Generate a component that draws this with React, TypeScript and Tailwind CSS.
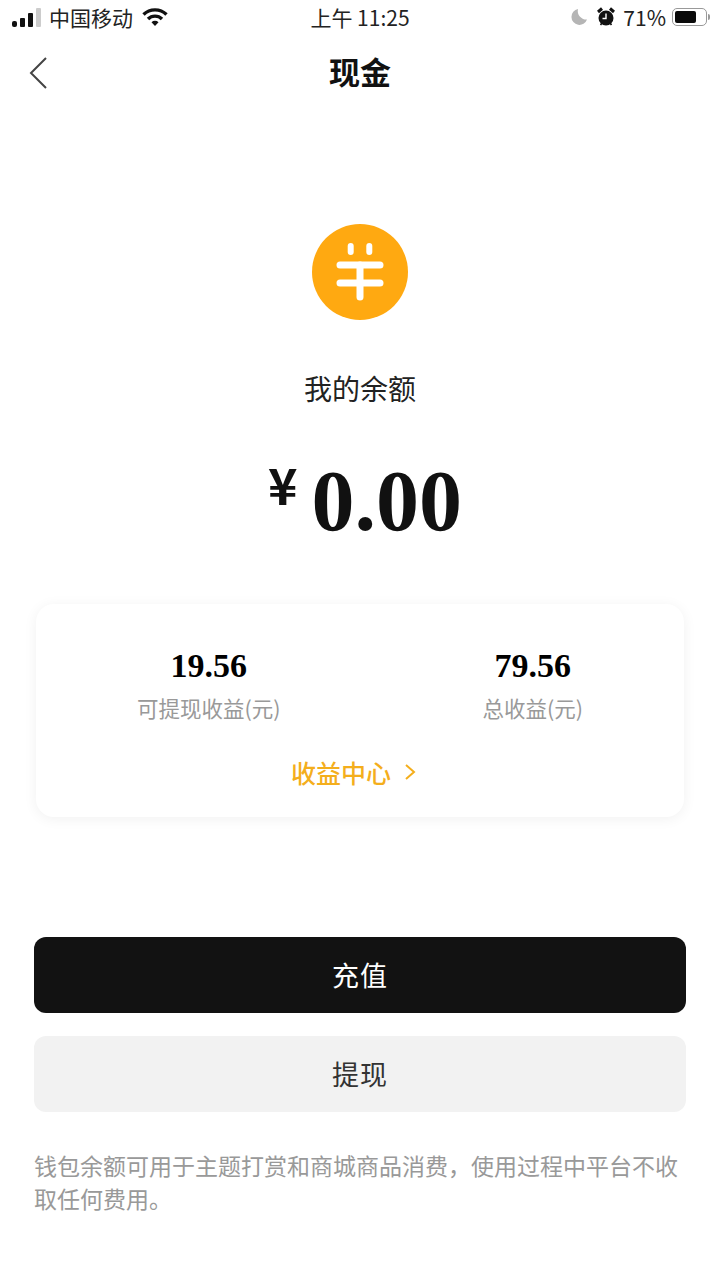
import React from "react";

const sans = "font-['Noto_Sans_CJK_SC','Liberation_Sans',sans-serif]";
const serif = "font-['Liberation_Serif',serif]";

const StatusBar: React.FC = () => (
  <div className="flex h-[36px] items-center justify-between pb-[2px] pl-[12px] pr-[10px] text-[21px] leading-none text-[#222]">
    <div className="flex w-[198px] items-center">
      <div className="flex items-end gap-[3px]">
        <span className="h-[6px] w-[5px] rounded-[2px] bg-[#111]" />
        <span className="h-[9px] w-[5px] rounded-[1px] bg-[#111]" />
        <span className="h-[14px] w-[5px] rounded-[1px] bg-[#111]" />
        <span className="h-[19px] w-[5px] rounded-[1px] bg-[#ccc]" />
      </div>
      <span className="ml-[8px] whitespace-nowrap">中国移动</span>
      <svg className="ml-[9px]" width="26" height="19" viewBox="0 0 26 19">
        <path d="M1.5 6.5a16.5 16.5 0 0 1 23 0" fill="none" stroke="#111" strokeWidth="3.4" />
        <path d="M6 11a10 10 0 0 1 14 0" fill="none" stroke="#111" strokeWidth="3.4" />
        <path d="M9.5 14.2a5 5 0 0 1 7 0L13 18z" fill="#111" />
      </svg>
    </div>
    <span className="whitespace-nowrap">上午 11:25</span>
    <div className="flex w-[200px] items-center justify-end">
      <svg width="18" height="18" viewBox="0 0 18 18">
        <path d="M8 1a8 8 0 1 0 9 10.5A8.5 8.5 0 0 1 8 1z" fill="#b5b5b5" />
      </svg>
      <svg className="ml-[9px]" width="18" height="20" viewBox="0 0 18 20">
        <circle cx="9" cy="11" r="7.5" fill="#111" />
        <path d="M1 5l4-3.5M17 5l-4-3.5" stroke="#111" strokeWidth="3" />
        <path d="M9 6.5V11.5H5.5" fill="none" stroke="#fff" strokeWidth="1.4" />
        <path d="M3.5 18l1.5-2M14.5 18L13 16" stroke="#111" strokeWidth="1.6" />
      </svg>
      <span className="ml-[8px] whitespace-nowrap">71%</span>
      <div className="ml-[6px] flex items-center">
        <div className="flex h-[18px] w-[35px] items-center rounded-[5px] border border-[#999] px-[2px]">
          <div className="h-[12px] w-[21px] rounded-[2px] bg-[#0a0a0a]" />
        </div>
        <span className="ml-[1px] h-[6px] w-[2px] rounded-r-[2px] bg-[#999]" />
      </div>
    </div>
  </div>
);

const Stat: React.FC<{ value: string; label: string }> = ({ value, label }) => (
  <div className="flex flex-col items-center">
    <span className={`${serif} text-[34px] font-bold leading-[40px] text-black`}>{value}</span>
    <span className="mt-[7px] whitespace-nowrap text-[21.5px] leading-[30px] text-[#999]">{label}</span>
  </div>
);

export default function App() {
  return (
    <div className={`${sans} flex h-[1280px] w-[720px] flex-col overflow-hidden bg-white`}>
      <StatusBar />

      <div className="relative flex h-[74px] items-center justify-center">
        <svg className="absolute left-[28px] top-[20px]" width="20" height="34" viewBox="0 0 20 34">
          <path d="M18 2L3 17l15 15" fill="none" stroke="#444" strokeWidth="2" />
        </svg>
        <span className="mb-[6px] text-[31px] font-bold leading-none text-[#111]">现金</span>
      </div>

      <div className="mt-[114px] flex flex-col items-center">
        <div className="flex h-[96px] w-[96px] items-center justify-center rounded-full bg-[#ffa911]">
          <svg width="48" height="62" viewBox="0 0 48 62">
            <g stroke="#fff" strokeLinecap="round" fill="none">
              <path d="M14.7 5v6M33.3 5v6" strokeWidth="6" />
              <path d="M4 24h40M4 42h40" strokeWidth="7" />
              <path d="M24 24v32" strokeWidth="7" />
            </g>
          </svg>
        </div>
        <span className="mt-[48px] text-[28px] leading-[40px] text-[#222]">我的余额</span>
        <div className="ml-[10px] mt-[51px] flex h-[84px] items-start text-[#111]">
          <span className={`${sans} text-[50px] font-bold leading-[48px]`}>¥</span>
          <span className={`${serif} ml-[14px] text-[86px] font-bold leading-[84px]`}>0.00</span>
        </div>
      </div>

      <div className="mx-[36px] mt-[61px] flex h-[213px] flex-col rounded-[18px] bg-white pt-[42px] shadow-[0_2px_14px_rgba(0,0,0,0.06)]">
        <div className="flex justify-between px-[101px]">
          <Stat value="19.56" label="可提现收益(元)" />
          <Stat value="79.56" label="总收益(元)" />
        </div>
        <div className="mr-[13px] mt-[31px] flex items-center justify-center text-[#f4ae1c]">
          <span className="text-[25px] font-medium leading-[36px]">收益中心</span>
          <svg className="ml-[13px]" width="12" height="18" viewBox="0 0 12 18">
            <path d="M2 2l8 7-8 7" fill="none" stroke="#f4ae1c" strokeWidth="2" />
          </svg>
        </div>
      </div>

      <div className="mx-[34px] mt-[120px] flex flex-col gap-[23px]">
        <button className="h-[76px] rounded-[12px] bg-[#121212] text-[27px] tracking-[1px] text-white">充值</button>
        <button className="h-[76px] rounded-[12px] bg-[#f2f2f2] text-[27px] tracking-[1px] text-[#333]">提现</button>
      </div>

      <p className="mx-[34px] mt-[37px] text-[23px] leading-[33px] text-[#999]">
        钱包余额可用于主题打赏和商城商品消费，使用过程中平台不收取任何费用。
      </p>
    </div>
  );
}
